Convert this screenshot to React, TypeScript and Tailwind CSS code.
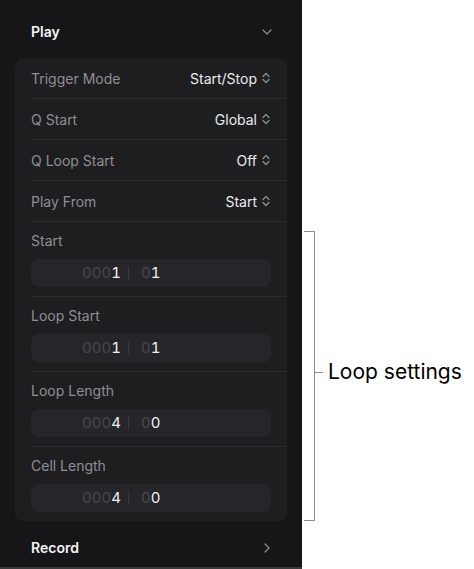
import { ChevronDown, ChevronRight } from "lucide-react";

const SANS = "font-['Inter','Liberation_Sans',sans-serif]";

// small up/down chevron used by the pop-up menus
function UpDown() {
  return (
    <svg width="8" height="12" viewBox="0 0 8 12" fill="none" className="ml-[5px]">
      <path d="M1 4.5 L4 1.5 L7 4.5" stroke="#8e8e93" strokeWidth="1.3" strokeLinecap="round" strokeLinejoin="round" />
      <path d="M1 7.5 L4 10.5 L7 7.5" stroke="#8e8e93" strokeWidth="1.3" strokeLinecap="round" strokeLinejoin="round" />
    </svg>
  );
}

const POPUPS = [
  { label: "Trigger Mode", value: "Start/Stop" },
  { label: "Q Start", value: "Global" },
  { label: "Q Loop Start", value: "Off" },
  { label: "Play From", value: "Start" },
];

const POSITIONS = [
  { label: "Start", bar: "1", beat: "1" },
  { label: "Loop Start", bar: "1", beat: "1" },
  { label: "Loop Length", bar: "4", beat: "0" },
  { label: "Cell Length", bar: "4", beat: "0" },
];

function PositionField({ bar, beat }: { bar: string; beat: string }) {
  return (
    <div className="h-[28px] rounded-lg bg-[#26262a] flex items-center text-[15px] tabular-nums">
      <div className="w-[90px] text-right">
        <span className="text-[#48484c]">000</span>
        <span className="text-[#f2f2f4]">{bar}</span>
      </div>
      <div className="ml-[7px] w-px h-[14px] bg-[#3a3a3e]" />
      <div className="ml-[12px]">
        <span className="text-[#48484c]">0</span>
        <span className="text-[#f2f2f4]">{beat}</span>
      </div>
    </div>
  );
}

export default function App() {
  return (
    <div className={`w-[474px] h-[569px] bg-white flex ${SANS}`}>
      <div className="w-[302px] h-full bg-[#161618] flex flex-col">
        <div className="flex items-center justify-between pl-[31px] pr-[27px] pt-[22px] pb-[16px]">
          <span className="text-[14px] leading-5 font-semibold text-[#f4f4f6]">Play</span>
          <ChevronDown size={16} strokeWidth={1.8} className="text-[#8e8e93]" />
        </div>

        <div className="mx-[15px] rounded-lg bg-[#1e1e21]">
          {POPUPS.map((p) => (
            <div key={p.label} className="ml-[16px] border-b border-[#2c2c30]">
              <div className="h-[40px] flex items-center justify-between pr-[17px] text-[14px]">
                <span className="text-[#8e8e93]">{p.label}</span>
                <span className="flex items-center text-[#ececee]">
                  {p.value}
                  <UpDown />
                </span>
              </div>
            </div>
          ))}
          {POSITIONS.map((p, i) => (
            <div
              key={p.label}
              className={i < POSITIONS.length - 1 ? "ml-[16px] border-b border-[#2c2c30]" : "ml-[16px]"}
            >
              <div className="pt-[9px] pb-[9px] pr-[16px]">
                <div className="text-[14px] leading-5 text-[#8e8e93]">{p.label}</div>
                <div className="mt-[8px]">
                  <PositionField bar={p.bar} beat={p.beat} />
                </div>
              </div>
            </div>
          ))}
        </div>

        <div className="flex items-center justify-between pl-[31px] pr-[27px] mt-[17px]">
          <span className="text-[14px] leading-5 font-semibold text-[#f4f4f6]">Record</span>
          <ChevronRight size={16} strokeWidth={1.8} className="text-[#8e8e93]" />
        </div>
        <div className="flex-1" />
        <div className="h-[2px] bg-[#3a3a3c]" />
      </div>

      {/* annotation */}
      <div className="flex items-start pt-[231px] pl-[2px]">
        <div className="w-[11px] h-[290px] border-y border-r border-[#8a8a8a]" />
        <div className="flex items-center mt-[127px]">
          <div className="w-[8px] h-px bg-[#8a8a8a]" />
          <span className="ml-[5px] text-[21px] leading-7 text-black">Loop settings</span>
        </div>
      </div>
    </div>
  );
}
